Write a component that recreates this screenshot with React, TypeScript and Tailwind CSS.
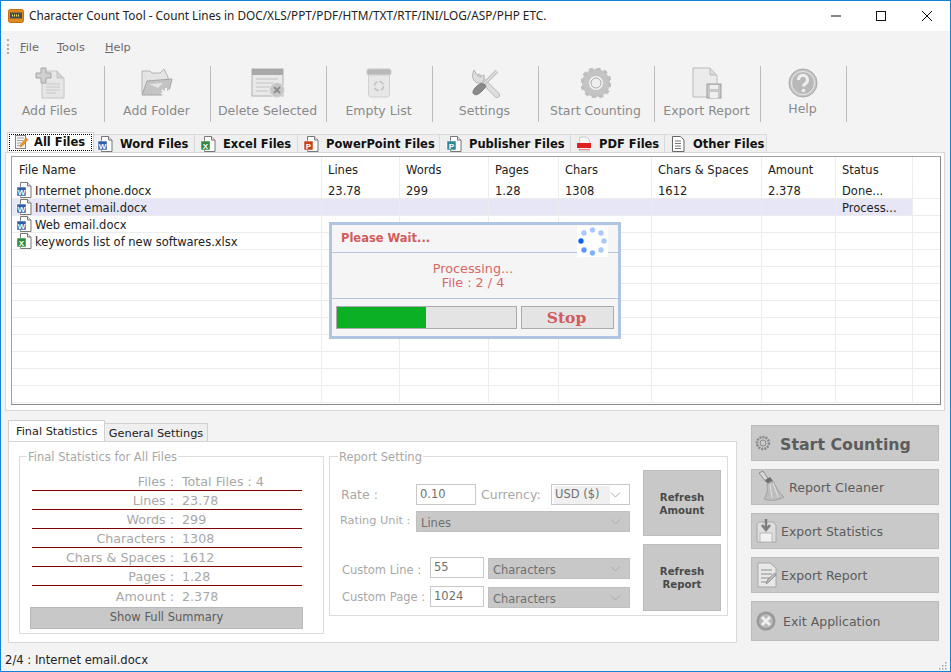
import React from 'react';

const dv = 'font-["DejaVu_Sans",sans-serif]';

function Sheet({ mark, color }: { mark: string; color: string }) {
  return (
    <svg width="16" height="16" viewBox="0 0 16 16" className="shrink-0">
      <path d="M4.5 .5h7l3.5 3.5v11.500h-10.500z" fill="#fff" stroke="#777" />
      <path d="M11.500 .5v3.500h3.500" fill="#e8e8e8" stroke="#777" />
      <rect x="1" y="5" width="9" height="9" fill={color} stroke="#fff" strokeWidth=".5" />
      <text x="5.500" y="12.500" fontSize="8" fontWeight="700" textAnchor="middle" fill="#fff" fontFamily="Liberation Sans">
        {mark}
      </text>
    </svg>
  );
}

function TabIcon({ kind }: { kind: string }) {
  if (kind === 'all')
    return (
      <svg width="16" height="16" viewBox="0 0 16 16" className="shrink-0">
        <rect x="2.500" y="1.500" width="10" height="13" fill="#f4f4f4" stroke="#888" />
        <path d="M4 4h7M4 6.500h6M4 9h4M4 11.500h3" stroke="#aaa" />
        <path d="M7 13l1-3 5-6 2 1.500-5 6z" fill="#f09a20" stroke="#b5651d" strokeWidth=".5" />
      </svg>
    );
  if (kind === 'word') return <Sheet mark="W" color="#2f5fa8" />;
  if (kind === 'excel') return <Sheet mark="X" color="#2f8a3d" />;
  if (kind === 'ppt') return <Sheet mark="P" color="#c8401a" />;
  if (kind === 'pub') return <Sheet mark="P" color="#2b8a9a" />;
  if (kind === 'pdf')
    return (
      <svg width="16" height="16" viewBox="0 0 16 16" className="shrink-0">
        <path d="M3.500 1h7l3 3v11h-10z" fill="#f6f6f6" stroke="#ccc" />
        <rect x="1" y="7" width="14" height="5" fill="#e02020" />
        <path d="M3 13.500h10" stroke="#e98080" />
      </svg>
    );
  return (
    <svg width="16" height="16" viewBox="0 0 16 16" className="shrink-0">
      <path d="M2.500 .5h8l3.500 3.500v11.500h-11.500z" fill="#fff" stroke="#666" />
      <path d="M5 5h6M5 7.500h6M5 10h6M5 12.500h6" stroke="#777" />
    </svg>
  );
}

function ToolIcon({ kind }: { kind: string }) {
  const s = '#a9a9a9';
  const f = '#d9d9d9';
  if (kind === 'addFiles')
    return (
      <svg width="30" height="32" viewBox="0 0 30 32">
        <path d="M7 4h15l7 7v20h-22z" fill="#e6e6e6" stroke="#c4c4c4" />
        <path d="M22 4v7h7" fill="#d2d2d2" stroke="#c4c4c4" />
        <path d="M11 17h14M11 20h14M11 23h14M11 26h10" stroke="#c8c8c8" />
        <path d="M6 1h5v5h5v5h-5v5h-5v-5h-5v-5h5z" fill="#cfcfcf" stroke="#a5a5a5" />
      </svg>
    );
  if (kind === 'addFolder')
    return (
      <svg width="32" height="32" viewBox="0 0 32 32">
        <path d="M1 4h8l2 2h8l4-4 4 8v16h-26z" fill="#e4e4e4" stroke="#b4b4b4" />
        <path d="M1 28l5-14 25-2-4 16z" fill="#c4c4c4" stroke="#a5a5a5" />
        <path d="M8 17l14-1-5 5z" fill="#e4e4e4" />
        <path d="M25 21v11M20 26.500h10M21 23l8 7M29 23l-8 7" stroke="#f4f4f4" strokeWidth="2" />
      </svg>
    );
  if (kind === 'delete')
    return (
      <svg width="34" height="30" viewBox="0 0 34 30">
        <rect x="1" y="1" width="31" height="27" fill="#e9e9e9" stroke="#b2b2b2" />
        <rect x="1" y="1" width="31" height="6" fill="#a9a9a9" />
        <path d="M5 11h22M5 15h18M5 19h14M5 23h12" stroke="#c2c2c2" />
        <circle cx="26" cy="22" r="7.500" fill="#c7c7c7" stroke="#e6e6e6" />
        <path d="M23 19l6 6M29 19l-6 6" stroke="#8e8e8e" strokeWidth="2" />
      </svg>
    );
  if (kind === 'empty')
    return (
      <svg width="26" height="30" viewBox="0 0 26 30">
        <rect x="1" y="1" width="24" height="6" rx="2" fill="#b8b8b8" stroke="#c9c9c9" />
        <path d="M2.500 7h21v19a3 3 0 0 1-3 3h-15a3 3 0 0 1-3-3z" fill="#e7e7e7" stroke="#cfcfcf" />
        <circle cx="13" cy="18" r="4.500" fill="none" stroke="#c2c2c2" strokeWidth="1.500" strokeDasharray="5 2" />
      </svg>
    );
  if (kind === 'settings')
    return (
      <svg width="30" height="30" viewBox="0 0 30 30">
        <path d="M9 9l18 18" stroke="#bdbdbd" strokeWidth="6" strokeLinecap="round" />
        <path d="M9 9l18 18" stroke="#dedede" strokeWidth="4" strokeLinecap="round" />
        <path d="M4 2l3 5 3 2 4-2c1 4-1 9-6 8s-7-7-4-13z" fill="#dedede" stroke="#b4b4b4" />
        <path d="M27 3l-14 14" stroke="#bdbdbd" strokeWidth="3.500" />
        <path d="M27 3l-14 14" stroke="#e2e2e2" strokeWidth="1.500" />
        <path d="M15 17c-3-3-6-1-9 2-3 3-4 6-2 7 2 2 5 0 8-3s5-5 3-6z" fill="#8a8a8a" stroke="#7c7c7c" />
      </svg>
    );
  if (kind === 'start')
    return (
      <svg width="30" height="30" viewBox="0 0 30 30">
        <circle cx="15" cy="15" r="10.500" fill="none" stroke="#c4c4c4" strokeWidth="7" />
        <circle cx="15" cy="15" r="14" fill="none" stroke="#bfbfbf" strokeWidth="3.500" strokeDasharray="4 3.330" />
        <circle cx="15" cy="15" r="5" fill="#efefef" stroke={s} />
      </svg>
    );
  if (kind === 'export')
    return (
      <svg width="30" height="32" viewBox="0 0 30 32">
        <path d="M1 1h17l7 7v22h-24z" fill="#ebebeb" stroke="#bcbcbc" />
        <path d="M18 1v7h7" fill={f} stroke="#bcbcbc" />
        <rect x="15" y="17" width="14" height="14" fill="#c8c8c8" stroke="#9f9f9f" />
        <rect x="18" y="18" width="8" height="4" fill="#efefef" />
        <rect x="18" y="25" width="8" height="6" fill="#efefef" />
      </svg>
    );
  return (
    <svg width="30" height="30" viewBox="0 0 30 30">
      <circle cx="15" cy="15" r="14" fill="#c6c6c6" stroke="#a8a8a8" />
      <circle cx="15" cy="15" r="11.500" fill="#b9b9b9" stroke="#e8e8e8" />
      <path d="M10.500 12a4.500 4.500 0 1 1 7 3.500c-1.500 1-2 1.500-2 3" fill="none" stroke="#efefef" strokeWidth="3" />
      <circle cx="15.500" cy="22.500" r="1.800" fill="#efefef" />
    </svg>
  );
}

const tools = [
  { label: 'Add Files', icon: 'addFiles', w: 'w-[104px] pr-[6px]' },
  { label: 'Add Folder', icon: 'addFolder', w: 'w-[106px] pr-[2px]' },
  { label: 'Delete Selected', icon: 'delete', w: 'w-[116px] pr-[2px]' },
  { label: 'Empty List', icon: 'empty', w: 'w-[106px] pr-[2px]' },
  { label: 'Settings', icon: 'settings', w: 'w-[106px] pr-[2px]' },
  { label: 'Start Counting', icon: 'start', w: 'w-[116px] pr-[2px]' },
  { label: 'Export Report', icon: 'export', w: 'w-[106px] pr-[2px]' },
  { label: 'Help', icon: 'help', w: 'w-[86px] pr-[2px]' },
];

const tabs = [
  { label: 'Word Files', icon: 'word', w: 'w-[101px] pl-[3px]' },
  { label: 'Excel Files', icon: 'excel', w: 'w-[103px] pl-[5px]' },
  { label: 'PowerPoint Files', icon: 'ppt', w: 'w-[142px] pl-[5px]' },
  { label: 'Publisher Files', icon: 'pub', w: 'w-[131px] pl-[6px]' },
  { label: 'PDF Files', icon: 'pdf', w: 'w-[94px] pl-[5px]' },
  { label: 'Other Files', icon: 'other', w: 'w-[102px] pl-[5px]' },
];

const cols = ['w-[310px]', 'w-[78px]', 'w-[89px]', 'w-[70px]', 'w-[93px]', 'w-[110px]', 'w-[74px]', 'w-[77px]'];
const headers = ['File Name', 'Lines', 'Words', 'Pages', 'Chars', 'Chars & Spaces', 'Amount', 'Status'];

const files: { name: string; icon: string; cells?: string[]; on?: boolean }[] = [
  { name: 'Internet phone.docx', icon: 'word', cells: ['23.78', '299', '1.28', '1308', '1612', '2.378', 'Done...'] },
  { name: 'Internet email.docx', icon: 'word', cells: ['', '', '', '', '', '', 'Process...'], on: true },
  { name: 'Web email.docx', icon: 'word' },
  { name: 'keywords list of new softwares.xlsx', icon: 'excel' },
  ...Array.from({ length: 9 }, () => ({ name: '', icon: '' })),
];

const stats = [
  ['Files :', 'Total Files : 4'],
  ['Lines :', '23.78'],
  ['Words :', '299'],
  ['Characters :', '1308'],
  ['Chars & Spaces :', '1612'],
  ['Pages :', '1.28'],
  ['Amount :', '2.378'],
];

function Chevron() {
  return (
    <svg width="11" height="6" viewBox="0 0 11 6" className="shrink-0">
      <path d="M1 .5l4.500 4.500 4.500-4.500" fill="none" stroke="#a8a8a8" />
    </svg>
  );
}

function GraySelect({ label, w }: { label: string; w: string }) {
  return (
    <div className={`${w} h-[21px] bg-[#c8c8c8] border border-[#c0c0c0] flex items-center justify-between pl-1 pr-2 text-[11.500px] text-[#707070]`}>
      <span className="pt-[4px]">{label}</span>
      <Chevron />
    </div>
  );
}

function TextBox({ value, w }: { value: string; w: string }) {
  return (
    <div className={`${w} h-[21px] bg-white border border-[#c8c8c8] flex items-center pl-[3px] pt-[1px] text-[11.500px] text-[#707070]`}>{value}</div>
  );
}

function SideButton({ icon, label, cls, h = 'h-[36px]', up = 'pt-[2px]' }: { icon: React.ReactNode; label: string; cls: string; h?: string; up?: string }) {
  return (
    <button className={`w-[188px] ${h} bg-[#c9c9c9] border border-[#bcbcbc] flex items-center text-[#5c5c5c] ${cls}`}>
      {icon}
      <span className={up}>{label}</span>
    </button>
  );
}

export default function App() {
  return (
    <div className={`w-[951px] h-[672px] border border-[#0f83d7] bg-[#f3f3f3] overflow-hidden relative flex flex-col ${dv}`}>
      {/* title bar */}
      <div className="h-[30px] bg-white flex items-center shrink-0 font-['Noto_Sans',sans-serif] text-[11.800px] text-[#222]">
        <svg width="16" height="14" viewBox="0 0 16 14" className="ml-[7px] mr-[5px] shrink-0">
          <rect x=".5" y=".5" width="15" height="13" rx="2" fill="#e08a1e" stroke="#c76a10" />
          <rect x="2" y="3.500" width="12" height="6" fill="#4a4a4a" />
          <path d="M4 6.500h8" stroke="#e6e06a" strokeDasharray="1 1" strokeWidth="2" />
        </svg>
        <span className="flex-1">Character Count Tool - Count Lines in DOC/XLS/PPT/PDF/HTM/TXT/RTF/INI/LOG/ASP/PHP ETC.</span>
        <svg width="10" height="10" viewBox="0 0 10 10" className="mr-[35px]"><path d="M0 5h10" stroke="#111" /></svg>
        <svg width="10" height="10" viewBox="0 0 10 10" className="mr-[36px]"><rect x=".5" y=".5" width="9" height="9" fill="none" stroke="#111" /></svg>
        <svg width="10" height="10" viewBox="0 0 10 10" className="mr-[18px]"><path d="M0 0l10 10M10 0l-10 10" stroke="#111" /></svg>
      </div>

      {/* menu */}
      <div className="h-[31px] flex items-center shrink-0 text-[11.300px] text-[#6a6a6a]">
        <div className="ml-[6px] mr-[11px] h-[15px] w-[2px] border-l-2 border-dotted border-[#aaa]" />
        <span className="w-[37px] pt-[4px]"><u>F</u>ile</span>
        <span className="w-[48px] pt-[4px]"><u>T</u>ools</span>
        <span className="pt-[4px]"><u>H</u>elp</span>
      </div>

      {/* toolbar */}
      <div className="h-[56px] mt-[4px] flex shrink-0 text-[12.500px] text-[#8a8a8a]">
        {tools.map((t) => (
          <div key={t.label} className={`${t.w} h-full border-r border-[#bdbdbd] flex flex-col items-center justify-between pb-[1px]`}>
            <div className="h-[34px] flex items-center"><ToolIcon kind={t.icon} /></div>
            <span className={t.icon === 'help' ? 'mb-[2px]' : ''}>{t.label}</span>
          </div>
        ))}
      </div>

      {/* file type tabs */}
      <div className="h-[20px] mt-[10px] ml-[6px] flex items-end shrink-0 text-[11.500px] font-bold text-[#111]">
        <div className="w-[87px] h-[20px] bg-white border border-[#d0d0d0] border-b-0 flex items-center relative z-10 p-[1px]">
          <div className="w-full h-full border border-dotted border-black flex items-center gap-[5px] pl-[3px] mb-[1px]">
            <TabIcon kind="all" />
            <span className="pt-[2px]">All Files</span>
          </div>
        </div>
        {tabs.map((t) => (
          <div key={t.label} className={`${t.w} h-[18px] bg-[#efefef] border border-[#dadada] border-b-0 border-l-0 flex items-center gap-[7px]`}>
            <TabIcon kind={t.icon} />
            <span className="pt-[3px]">{t.label}</span>
          </div>
        ))}
      </div>

      {/* file list */}
      <div className="h-[259px] ml-[4px] mr-[5px] bg-white border border-[#d8d8d8] pt-[3px] pl-[5px] pr-[3px] shrink-0">
        <div className="h-[249px] border border-[#a0a0a0] border-r-[#888888] border-b-[#888888] text-[11.500px] text-[#222] overflow-hidden relative">
          <div className="h-[25px] flex items-center">
            {headers.map((h, i) => (
              <div key={h} className={`${cols[i]} h-full flex items-center ${i === 0 ? 'pl-[7px]' : 'pl-[6px]'} pt-[3px] border-r border-[#eeeeee]`}>{h}</div>
            ))}
          </div>
          {files.map((f, r) => (
            <div key={r} className="h-[17px] flex border-b border-[#ececec]">
              <div className={`${cols[0]} flex items-center gap-[3px] pl-[4px] border-r border-[#ececec] whitespace-nowrap ${f.on ? 'bg-[#e6e6f6]' : ''}`}>
                {f.icon && <TabIcon kind={f.icon} />}
                <span className="pt-[4px]">{f.name}</span>
              </div>
              {cols.slice(1).map((c, i) => (
                <div key={c} className={`${c} flex items-center pl-[6px] pt-[4px] border-r border-[#ececec] ${f.on ? 'bg-[#e6e6f6]' : ''}`}>{f.cells?.[i]}</div>
              ))}
            </div>
          ))}

          {/* please wait dialog */}
          <div className="absolute left-[317px] top-[65px] w-[292px] h-[117px] border-[3px] border-[#b0c6e0] bg-[#f5f5f5] flex flex-col">
            <div className="h-[28px] border-b border-[#b4c6dc] flex items-center pl-[9px] text-[11.500px] font-bold text-[#d05c5c] relative shrink-0">
              Please Wait...
              <div className="absolute right-[10px] top-[1px] w-[31px] h-[31px] bg-white">
                <svg width="31" height="31" viewBox="0 0 31 31">
                  {[
                    [15.500, 4, '#a8c8ff'], [24, 7, '#a8c8ff'], [27, 15, '#a8c8ff'], [24, 24, '#a8c8ff'],
                    [15.500, 27, '#80b0ff'], [7, 24, '#5a98ff'], [4, 15, '#0a64f0'], [7, 7, '#a8c8ff'],
                  ].map(([x, y, c], i) => (
                    <circle key={i} cx={x as number} cy={y as number} r="2.700" fill={c as string} />
                  ))}
                </svg>
              </div>
            </div>
            <div className="h-[46px] border-b border-[#b4c6dc] flex flex-col items-center justify-center pr-[4px] text-[12.800px] leading-[14px] text-[#d86868] shrink-0">
              <span>Processing...</span>
              <span>File : 2 / 4</span>
            </div>
            <div className="flex-1 flex items-center gap-[4px] pl-[4px]">
              <div className="w-[181px] h-[23px] border border-[#aaaaaa] bg-[#e4e4e4]">
                <div className="h-full w-[89px] bg-[#0bb024]" />
              </div>
              <div className="w-[93px] h-[23px] border border-[#aaaaaa] bg-[#e4e4e4] flex items-center justify-center pr-[2px] font-['DejaVu_Serif',serif] font-bold text-[15.500px] text-[#d05c5c]">
                Stop
              </div>
            </div>
          </div>
        </div>
      </div>

      <div className="h-[10px] shrink-0" />

      {/* lower area */}
      <div className="flex shrink-0">
        <div className="w-[729px] ml-[7px]">
          <div className="h-[20px] flex items-end text-[11.300px]">
            <div className="w-[97px] h-[21px] bg-white border border-[#d0d0d0] border-b-0 flex items-center pl-[7px] pt-[2px] text-[#222] relative z-10">Final Statistics</div>
            <div className="w-[103px] h-[18px] bg-[#efefef] border border-[#d0d0d0] border-b-0 border-l-0 flex items-center justify-center pt-[4px] text-[#222]">General Settings</div>
          </div>
          <div className="h-[202px] bg-white border border-[#d8d8d8] flex pl-[10px] text-[11.500px] text-[#a8a8a8]">
            <fieldset className="w-[305px] h-[185px] mt-[7px] border border-[#dcdcdc] flex flex-col">
              <legend className="ml-[7px] px-[1px] pt-[2px] leading-[12px]">Final Statistics for All Files</legend>
              <div className="mt-[9px] w-[270px] ml-[12px] flex flex-col">
                {stats.map(([k, v], i) => (
                  <div key={k} className={`h-[19px] flex items-center pt-[2px] ${i < 6 ? 'border-b border-[#800000]' : ''} text-[12.700px]`}>
                    <span className="w-[142px] text-right">{k}</span>
                    <span className="ml-[8px]">{v}</span>
                  </div>
                ))}
              </div>
              <button className="w-[273px] ml-[10px] mt-[2px] h-[22px] bg-[#c8c8c8] border border-[#b8b8b8] text-[11.500px] text-[#5c5c5c]">Show Full Summary</button>
            </fieldset>

            <fieldset className="w-[399px] h-[167px] mt-[7px] ml-[5px] border border-[#dcdcdc] flex text-[11.500px]">
              <legend className="ml-[8px] px-[1px] pt-[2px] leading-[12px]">Report Setting</legend>
              <div className="w-[313px] pt-[21px] pl-[10px] flex flex-col">
                <div className="flex items-center h-[21px]">
                  <span className="w-[76px] pl-[1px] pt-[1px] text-[12.500px]">Rate :</span>
                  <TextBox value="0.10" w="w-[60px]" />
                  <span className="w-[75px] pl-[5px] pt-[1px] text-[12.500px]">Currency:</span>
                  <div className="w-[79px] h-[21px] bg-white border border-[#c8c8c8] flex items-center justify-between pl-[2px] pr-2 pt-[1px] text-[#707070]">
                    <span className="bg-[#f0f0f0] w-[56px] pl-[1px]">USD ($)</span>
                    <Chevron />
                  </div>
                </div>
                <div className="flex items-center h-[21px] mt-[6px]">
                  <span className="w-[76px] text-[11.300px]">Rating Unit :</span>
                  <GraySelect label="Lines" w="w-[214px]" />
                </div>
                <div className="flex items-center h-[21px] mt-[25px]">
                  <span className="w-[90px] pl-[2px] pt-[7px] text-[11.500px]">Custom Line :</span>
                  <TextBox value="55" w="w-[54px]" />
                  <div className="ml-[4px] mt-[2px]"><GraySelect label="Characters" w="w-[142px]" /></div>
                </div>
                <div className="flex items-center h-[21px] mt-[8px]">
                  <span className="w-[90px] pl-[2px] pt-[3px] text-[11.500px] whitespace-nowrap">Custom Page :</span>
                  <TextBox value="1024" w="w-[54px]" />
                  <div className="ml-[4px] mt-[2px]"><GraySelect label="Characters" w="w-[142px]" /></div>
                </div>
              </div>
              <div className="pt-[7px] flex flex-col gap-[8px]">
                {[['Refresh', 'Amount', 'h-[66px]', 'pt-[2px]'], ['Refresh', 'Report', 'h-[67px]', 'pt-[1px]']].map(([a, b, h, p]) => (
                  <button key={b} className={`w-[78px] ${h} ${p} bg-[#c8c8c8] border border-[#bcbcbc] text-[10.200px] leading-[13px] font-bold text-[#4a4a4a] flex flex-col items-center justify-center`}>
                    <span>{a}</span>
                    <span>{b}</span>
                  </button>
                ))}
              </div>
            </fieldset>
          </div>
        </div>

        {/* side actions */}
        <div className="ml-[14px] mt-[4px] flex flex-col gap-[8px]">
          <SideButton
            cls="text-[15.800px] font-bold gap-[9px] pl-[3px]"
            up="pt-[4px]"
            label="Start Counting"
            icon={
              <svg width="16" height="16" viewBox="0 0 16 16">
                <circle cx="8" cy="8" r="6" fill="none" stroke="#8a8a8a" strokeDasharray="2 1" strokeWidth="2.500" />
                <circle cx="8" cy="8" r="3" fill="none" stroke="#8a8a8a" />
              </svg>
            }
          />
          <SideButton
            cls="text-[12.700px] gap-[3px] pl-[4px]"
            label="Report Cleaner"
            icon={
              <svg width="30" height="34" viewBox="0 0 30 34">
                <path d="M3 3l4-2 6 9-3 2z" fill="#d8d8d8" stroke="#8e8e8e" />
                <path d="M9 10l5-3 3 4-5 3z" fill="#6e6e6e" />
                <path d="M11 14l6-3c3 6 6 12 11 16-6 4-16 4-20 2 3-4 4-9 3-15z" fill="#bdbdbd" stroke="#a0a0a0" />
                <path d="M14 14l2 14M17 13l5 14" stroke="#e2e2e2" />
              </svg>
            }
          />
          <SideButton
            cls="text-[12.500px] gap-[4px] pl-[3px]"
            label="Export Statistics"
            icon={
              <svg width="22" height="26" viewBox="0 0 22 26">
                <path d="M4 4h14l3 3v17h-19v-18z" fill="#dedede" stroke="#a8a8a8" />
                <rect x="5" y="15" width="12" height="9" fill="#f2f2f2" stroke="#b8b8b8" />
                <path d="M11 1v9M7 7l4 5 4-5" fill="none" stroke="#7e7e7e" strokeWidth="2.500" />
              </svg>
            }
          />
          <SideButton
            cls="text-[12.500px] gap-[4px] pl-[5px]"
            label="Export Report"
            icon={
              <svg width="20" height="26" viewBox="0 0 20 26">
                <path d="M1 1h12l6 5v19h-18z" fill="#e8e8e8" stroke="#a8a8a8" />
                <path d="M4 8h11M4 12h11M4 16h9M4 20h6" stroke="#8e8e8e" />
                <path d="M9 22l2-5 7-6 1 2-7 7z" fill="#bbb" stroke="#777" strokeWidth=".6" />
              </svg>
            }
          />
          <SideButton
            h="h-[40px]"
            cls="text-[12.500px] gap-[7px] pl-[4px]"
            label="Exit Application"
            icon={
              <svg width="20" height="20" viewBox="0 0 20 20">
                <circle cx="10" cy="10" r="9.500" fill="#999" />
                <circle cx="10" cy="10" r="7" fill="#b8b8b8" />
                <path d="M6 6l8 8M14 6l-8 8" stroke="#f0f0f0" strokeWidth="3" />
              </svg>
            }
          />
        </div>
      </div>

      {/* status bar */}
      <div className="flex-1 flex items-center justify-between pl-[4px] pr-[2px] pt-[8px] text-[11.600px] text-[#222]">
        <span>2/4 : Internet email.docx</span>
        <svg width="12" height="12" viewBox="0 0 12 12" className="self-end">
          {[[9, 1], [6, 4], [9, 4], [3, 7], [6, 7], [9, 7]].map(([x, y]) => (
            <rect key={`${x}-${y}`} x={x} y={y + 2} width="1.500" height="1.500" fill="#a8a8a8" />
          ))}
        </svg>
      </div>
    </div>
  );
}
